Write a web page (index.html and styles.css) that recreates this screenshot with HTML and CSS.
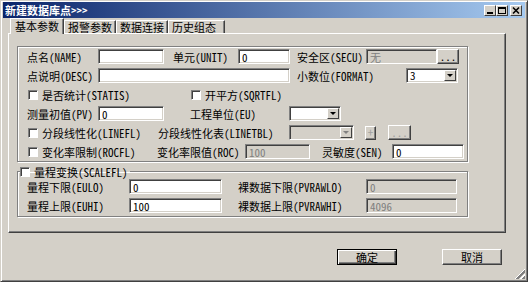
FILE: index.html
```html
<!DOCTYPE html>
<html lang="zh-CN">
<head>
  <meta charset="UTF-8" />
  <title>新建数据库点</title>
  <link rel="stylesheet" href="styles.css">
</head>
<body>
  <div class="window">
    <div class="titlebar">
      <span class="title">新建数据库点&gt;&gt;&gt;</span>
      <div class="caption-btns">
        <span class="cbtn" title="最小化">
          <svg width="10" height="9" viewBox="0 0 10 9"><rect x="2" y="6" width="6" height="2" fill="#000"/></svg>
        </span>
        <span class="cbtn" title="最大化">
          <svg width="10" height="9" viewBox="0 0 10 9"><rect x="1.5" y="1.5" width="7" height="6" fill="none" stroke="#000"/><rect x="1" y="1" width="8" height="2" fill="#000"/></svg>
        </span>
        <span class="cbtn close" title="关闭">
          <svg width="10" height="9" viewBox="0 0 10 9"><path d="M2 1.5 L8 7.5 M8 1.5 L2 7.5" stroke="#000" stroke-width="1.6"/></svg>
        </span>
      </div>
    </div>

    <div class="tabs">
      <div class="tab active">基本参数</div>
      <div class="tab">报警参数</div>
      <div class="tab">数据连接</div>
      <div class="tab last">历史组态</div>
    </div>

    <div class="panel">
      <fieldset class="group">
        <div class="row">
          <span class="lbl w71">点名(NAME)</span>
          <input class="field w66" type="text" value="">
          <span class="lbl w65 ml9">单元(UNIT)</span>
          <input class="field w52" type="text" value="0">
          <span class="lbl w69 ml7">安全区(SECU)</span>
          <input class="field w71" type="text" value="无" disabled>
          <button class="btn w22">...</button>
        </div>
        <div class="row">
          <span class="lbl w71">点说明(DESC)</span>
          <input class="field w192" type="text" value="">
          <span class="lbl w109 ml7">小数位(FORMAT)</span>
          <div class="combo w52"><span class="val">3</span><span class="arrow"></span></div>
        </div>
        <div class="row">
          <label class="chk w162"><input type="checkbox" class="box">是否统计(STATIS)</label>
          <label class="chk"><input type="checkbox" class="box">开平方(SQRTFL)</label>
        </div>
        <div class="row">
          <span class="lbl w71">测量初值(PV)</span>
          <input class="field w66" type="text" value="0">
          <span class="lbl w99 ml26">工程单位(EU)</span>
          <div class="combo w52"><span class="val"></span><span class="arrow"></span></div>
        </div>
        <div class="row">
          <label class="chk w130"><input type="checkbox" class="box">分段线性化(LINEFL)</label>
          <span class="lbl w131">分段线性化表(LINETBL)</span>
          <div class="combo w65 disabled"><span class="val"></span><span class="arrow"></span></div>
          <button class="btn plus ml11" disabled>+</button>
          <button class="btn w23 ml12" disabled>...</button>
        </div>
        <div class="row">
          <label class="chk w129"><input type="checkbox" class="box">变化率限制(ROCFL)</label>
          <span class="lbl w88">变化率限值(ROC)</span>
          <input class="field w65" type="text" value="100" disabled>
          <span class="lbl w70 ml12">灵敏度(SEN)</span>
          <input class="field w72" type="text" value="0">
        </div>
      </fieldset>

      <fieldset class="group scale">
        <legend class="legend"><input type="checkbox" class="box">量程变换(SCALEFL)</legend>
        <div class="row">
          <span class="lbl w102">量程下限(EULO)</span>
          <input class="field w93" type="text" value="0">
          <span class="lbl w128 ml16">裸数据下限(PVRAWLO)</span>
          <input class="field w91" type="text" value="0" disabled>
        </div>
        <div class="row">
          <span class="lbl w102">量程上限(EUHI)</span>
          <input class="field w93" type="text" value="100">
          <span class="lbl w128 ml16">裸数据上限(PVRAWHI)</span>
          <input class="field w91" type="text" value="4096" disabled>
        </div>
      </fieldset>
    </div>

    <div class="actions">
      <button class="btn dlg default">确定</button>
      <button class="btn dlg">取消</button>
    </div>

    <span class="grip"></span>
  </div>
</body>
</html>
```

FILE: styles.css
```css
body {
  margin: 0;
  background: #d4d0c8;
  font-family: "Noto Sans Mono CJK SC", "Noto Sans CJK SC", monospace;
  font-size: 11px;
  color: #000;
}
.window {
  position: relative;
  width: 528px;
  height: 282px;
  box-sizing: border-box;
  border: 1px solid;
  border-color: #d4d0c8 #404040 #404040 #d4d0c8;
  box-shadow: inset 1px 1px #fff, inset -1px -1px #808080;
  padding: 1px 2px 2px;
}
.titlebar {
  height: 16px;
  display: flex;
  align-items: center;
  justify-content: space-between;
  padding-left: 2px;
  background: linear-gradient(to right, #0a246a, #a6caf0);
}
.title {
  color: #fff;
  font-weight: bold;
  line-height: 16px;
}
.caption-btns {
  display: flex;
  margin-right: 3px;
}
.cbtn {
  display: flex;
  width: 10px;
  height: 9px;
  background: #d4d0c8;
  border: 1px solid;
  border-color: #fff #404040 #404040 #fff;
}
.cbtn.close {
  margin-left: 2px;
}

/* tabs */
.tabs {
  display: flex;
  align-items: flex-end;
  height: 15px;
  padding-left: 7px;
}
.tab {
  height: 12px;
  line-height: 12px;
  padding: 0 3px;
  border: 1px solid;
  border-bottom: 0;
  border-color: #fff #404040 #fff #fff;
  box-shadow: inset -1px 0 #808080;
  white-space: nowrap;
}
.tab.active {
  position: relative;
  z-index: 1;
  height: 15px;
  line-height: 14px;
  margin-bottom: -1px;
  padding: 0 4px;
  background: #d4d0c8;
}
.tab.last {
  padding-right: 8px;
}
.panel {
  height: 200px;
  box-sizing: border-box;
  margin: 0 19px 0 5px;
  padding: 12px 0 0 8px;
  border: 1px solid;
  border-color: #fff #404040 #404040 #fff;
  box-shadow: inset -1px -1px #808080;
}

/* group boxes */
.group {
  width: 451px;
  box-sizing: border-box;
  margin: 0;
  padding: 2px 0 2px 9px;
  border: 1px solid #808080;
  box-shadow: inset 1px 1px #fff, 1px 1px #fff;
  display: flex;
  flex-direction: column;
  gap: 4px;
}
.group.scale {
  margin-top: 3px;
  padding-top: 1px;
  padding-bottom: 3px;
}
.legend {
  display: flex;
  align-items: center;
  gap: 4px;
  height: 13px;
  margin-left: -7px;
  padding: 0 2px 0 0;
  white-space: nowrap;
}
.row {
  display: flex;
  align-items: center;
  height: 15px;
}
.lbl {
  flex: none;
  white-space: nowrap;
}
.chk {
  flex: none;
  display: flex;
  align-items: center;
  gap: 4px;
  margin-left: 1px;
  white-space: nowrap;
}
.box {
  appearance: none;
  flex: none;
  width: 10px;
  height: 10px;
  margin: 0;
  box-sizing: border-box;
  background: #fff;
  border: 1px solid;
  border-color: #808080 #fff #fff #808080;
  box-shadow: inset 1px 1px #404040;
}

/* controls */
.field {
  flex: none;
  height: 15px;
  box-sizing: border-box;
  margin: 0;
  padding: 0 0 0 3px;
  font: inherit;
  color: #000;
  background: #fff;
  border: 1px solid;
  border-color: #808080 #fff #fff #808080;
  box-shadow: inset 1px 1px #404040, inset -1px -1px #d4d0c8;
  outline: none;
}
.field:disabled {
  color: #808080;
  background: #d4d0c8;
}
.combo {
  flex: none;
  display: flex;
  height: 15px;
  box-sizing: border-box;
  background: #fff;
  border: 1px solid;
  border-color: #808080 #fff #fff #808080;
  box-shadow: inset 1px 1px #404040, inset -1px -1px #d4d0c8;
}
.combo .val {
  flex: 1;
  padding-left: 3px;
  line-height: 13px;
}
.combo .arrow {
  display: flex;
  align-items: center;
  justify-content: center;
  width: 10px;
  margin: 1px 1px 1px 0;
  background: #d4d0c8;
  border: 1px solid;
  border-color: #fff #404040 #404040 #fff;
}
.combo .arrow::after {
  content: "";
  border: 3px solid transparent;
  border-top: 3px solid #000;
  border-bottom: 0;
}
.combo.disabled {
  background: #d4d0c8;
}
.combo.disabled .arrow::after {
  border-top-color: #808080;
}
.btn {
  flex: none;
  height: 15px;
  box-sizing: border-box;
  margin: 0;
  padding: 0;
  font: inherit;
  line-height: 11px;
  color: #000;
  background: #d4d0c8;
  border: 1px solid;
  border-color: #fff #404040 #404040 #fff;
  box-shadow: inset -1px -1px #808080;
}
.btn:disabled {
  color: #a0a0a0;
}
.btn.plus {
  width: 11px;
  height: 14px;
}
.actions {
  display: flex;
  justify-content: flex-end;
  gap: 45px;
  margin: 16px 23px 0 0;
}
.btn.dlg {
  width: 60px;
  height: 16px;
  line-height: 12px;
}
.btn.default {
  border-color: #000;
  box-shadow: inset 1px 1px #fff, inset -1px -1px #404040, inset -2px -2px #808080;
}
.grip {
  position: absolute;
  right: 2px;
  bottom: 2px;
  width: 11px;
  height: 11px;
  background:
    linear-gradient(135deg, #d4d0c8 50%, transparent 50%),
    repeating-linear-gradient(135deg, #fff 0 1px, #808080 1px 3px, #d4d0c8 3px 4px);
}

/* widths and gaps */
.w22 { width: 22px; }
.w23 { width: 23px; }
.w52 { width: 52px; }
.w65 { width: 65px; }
.w66 { width: 66px; }
.w69 { width: 69px; }
.w70 { width: 70px; }
.w71 { width: 71px; }
.w72 { width: 72px; }
.w88 { width: 88px; }
.w91 { width: 91px; }
.w93 { width: 93px; }
.w99 { width: 99px; }
.w102 { width: 102px; }
.w109 { width: 109px; }
.w128 { width: 128px; }
.w129 { width: 129px; }
.w130 { width: 130px; }
.w131 { width: 131px; }
.w162 { width: 162px; }
.w192 { width: 192px; }
.ml7 { margin-left: 7px; }
.ml9 { margin-left: 9px; }
.ml11 { margin-left: 11px; }
.ml12 { margin-left: 12px; }
.ml16 { margin-left: 16px; }
.ml26 { margin-left: 26px; }
```
